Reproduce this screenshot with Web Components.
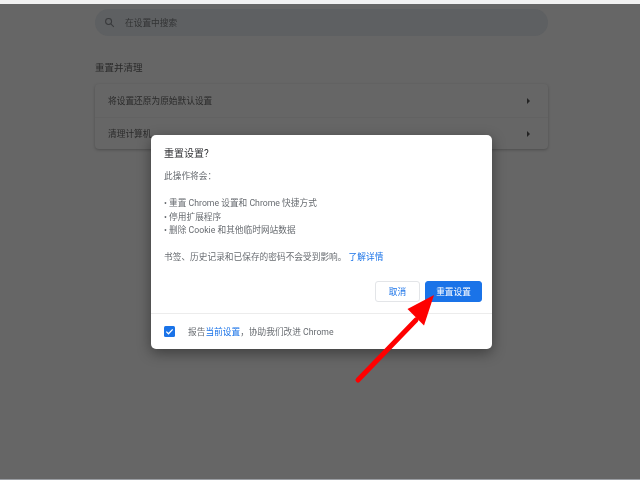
<!DOCTYPE html>
<html lang="zh-CN">
<head>
<meta charset="utf-8">
<style>
  html, body { margin: 0; height: 100%; }
  body { background: #666; font-family: Roboto, "Noto Sans CJK SC", sans-serif; overflow: hidden; }
</style>
</head>
<body>
<settings-screen>
  <search-bar slot="search">在设置中搜索</search-bar>
  <reset-card slot="card"></reset-card>
  <reset-dialog slot="dialog"></reset-dialog>
</settings-screen>

<script>
// Page frame --------------------------------------------------------
class SettingsScreen extends HTMLElement {
  constructor() {
    super();
    this.attachShadow({ mode: 'open' });
    this.shadowRoot.innerHTML = `
      <style>
        :host {
          display: block;
          position: relative;
          width: 640px;
          height: 480px;
          overflow: hidden;
          background: #666;
          box-sizing: border-box;
          border-top: 4px solid #f1f1f1;
          border-bottom: 1px solid #9a9da2;
          filter: blur(0.4px);
        }
        main {
          display: flex;
          flex-direction: column;
          width: 453px;
          margin: 5px 0 0 95px;
        }
        h2 {
          margin: 25px 0 9px;
          font: 400 9.5px/14px Roboto, "Noto Sans CJK SC", sans-serif;
          color: #2a2a2a;
        }
        .arrow { position: absolute; left: 350px; top: 286px; }
      </style>
      <main>
        <slot name="search"></slot>
        <h2>重置并清理</h2>
        <slot name="card"></slot>
      </main>
      <slot name="dialog"></slot>
      <svg class="arrow" width="90" height="99" viewBox="350 290 90 99">
        <line x1="358" y1="380" x2="416" y2="320" stroke="#fe0000" stroke-width="5" stroke-linecap="round"/>
        <polygon points="434,295 407.5,309 424,325.5" fill="#fe0000"/>
      </svg>
    `;
  }
}

// Search pill -------------------------------------------------------
class SearchBar extends HTMLElement {
  constructor() {
    super();
    this.attachShadow({ mode: 'open' });
    this.shadowRoot.innerHTML = `
      <style>
        :host {
          display: flex;
          align-items: center;
          gap: 10px;
          height: 27px;
          padding-left: 9px;
          border-radius: 14px;
          background: #5e6062;
          font-size: 8.7px;
          color: #323334;
        }
        svg { display: block; }
      </style>
      <svg width="11" height="11" viewBox="0 0 24 24" fill="none" stroke="#38393b" stroke-width="2.2">
        <circle cx="10" cy="10" r="6.5"/>
        <path d="M15 15l6.5 6.5"/>
      </svg>
      <slot></slot>
    `;
  }
}

// Card with two rows ------------------------------------------------
class ResetCard extends HTMLElement {
  constructor() {
    super();
    this.attachShadow({ mode: 'open' });
    this.shadowRoot.innerHTML = `
      <style>
        :host {
          display: block;
          border-radius: 4px;
          background: #666;
          box-shadow: 0 1px 3px rgba(0,0,0,.25);
        }
        .row {
          display: flex;
          align-items: center;
          justify-content: space-between;
          box-sizing: border-box;
          height: 33px;
          padding: 0 18px 0 13px;
          font-size: 8.7px;
          color: #2a2a2a;
        }
        .row + .row { height: 32px; border-top: 1px solid #626262; }
        .tri {
          width: 0;
          height: 0;
          border-left: 3px solid #232323;
          border-top: 3px solid transparent;
          border-bottom: 3px solid transparent;
        }
      </style>
      <div class="row"><span>将设置还原为原始默认设置</span><i class="tri"></i></div>
      <div class="row"><span>清理计算机</span><i class="tri"></i></div>
    `;
  }
}

// Confirm dialog ----------------------------------------------------
class ResetDialog extends HTMLElement {
  constructor() {
    super();
    this.attachShadow({ mode: 'open' });
    this.shadowRoot.innerHTML = `
      <style>
        :host {
          position: absolute;
          left: 151px;
          top: 131px;
          width: 341px;
          height: 214px;
          display: flex;
          flex-direction: column;
          box-sizing: border-box;
          background: #fff;
          border-radius: 5px;
          box-shadow: 0 4px 14px rgba(0,0,0,.4);
          color: #686c71;
          font-size: 8.7px;
        }
        h1 {
          margin: 11px 0 0 13px;
          font: 400 10px/15px Roboto, "Noto Sans CJK SC", sans-serif;
          color: #303134;
        }
        .body {
          margin: 9px 0 0 13px;
          line-height: 13.5px;
        }
        p { margin: 0; }
        .gap { margin-top: 13.5px; }
        a { color: #1a73e8; text-decoration: none; }
        .buttons {
          display: flex;
          justify-content: flex-end;
          gap: 5px;
          margin: 16px 10px 0 0;
        }
        button {
          height: 21px;
          border-radius: 3px;
          font: 400 8.7px Roboto, "Noto Sans CJK SC", sans-serif;
          padding: 0;
        }
        .cancel { width: 45px; background: #fff; border: 1px solid #e3e5e8; color: #1a73e8; }
        .go { width: 57px; background: #1a73e8; border: 1px solid #1a73e8; color: #fff; }
        footer {
          display: flex;
          align-items: center;
          gap: 13px;
          margin-top: auto;
          height: 35px;
          padding-left: 13px;
          border-top: 1px solid #ececec;
        }
        .check {
          width: 11px;
          height: 11px;
          border-radius: 1.5px;
          background: #1a73e8;
          display: block;
        }
      </style>
      <h1>重置设置?</h1>
      <div class="body">
        <p>此操作将会：</p>
        <p class="gap">• 重置 Chrome 设置和 Chrome 快捷方式</p>
        <p>• 停用扩展程序</p>
        <p>• 删除 Cookie 和其他临时网站数据</p>
        <p class="gap">书签、历史记录和已保存的密码不会受到影响。 <a>了解详情</a></p>
      </div>
      <div class="buttons">
        <button class="cancel">取消</button>
        <button class="go">重置设置</button>
      </div>
      <footer>
        <svg class="check" viewBox="0 0 11 11">
          <path d="M2.3 5.6l2.2 2.2 4.2-4.4" fill="none" stroke="#fff" stroke-width="1.3"/>
        </svg>
        <span>报告<a>当前设置</a>，协助我们改进 Chrome</span>
      </footer>
    `;
  }
}

// Register elements -------------------------------------------------
customElements.define('settings-screen', SettingsScreen);
customElements.define('search-bar', SearchBar);
customElements.define('reset-card', ResetCard);
customElements.define('reset-dialog', ResetDialog);
</script>
</body>
</html>
